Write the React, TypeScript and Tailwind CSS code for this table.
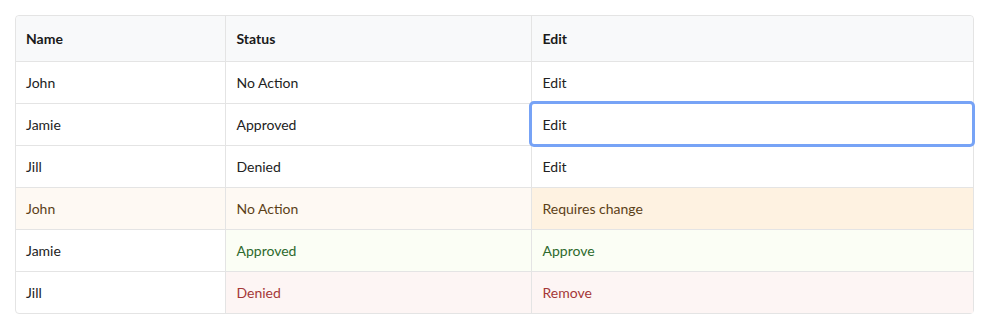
const rows = [
  { name: 'John', status: 'No Action', edit: 'Edit', tone: 'none' },
  { name: 'Jamie', status: 'Approved', edit: 'Edit', tone: 'none', focused: true },
  { name: 'Jill', status: 'Denied', edit: 'Edit', tone: 'none' },
  { name: 'John', status: 'No Action', edit: 'Requires change', tone: 'warn' },
  { name: 'Jamie', status: 'Approved', edit: 'Approve', tone: 'ok' },
  { name: 'Jill', status: 'Denied', edit: 'Remove', tone: 'bad' },
];

const tones: Record<string, { name: string; status: string; edit: string }> = {
  none: { name: 'text-[#222]', status: 'text-[#222]', edit: 'text-[#222]' },
  warn: {
    name: 'bg-[#fef9f3] text-[#5c3f17]',
    status: 'bg-[#fef9f3] text-[#5c3f17]',
    edit: 'bg-[#fef2e1] text-[#5c3f17]',
  },
  ok: {
    name: 'text-[#222]',
    status: 'bg-[#fbfef5] text-[#2d6a2d]',
    edit: 'bg-[#fbfef5] text-[#2d6a2d]',
  },
  bad: {
    name: 'text-[#222]',
    status: 'bg-[#fdf5f4] text-[#a53838]',
    edit: 'bg-[#fdf5f4] text-[#a53838]',
  },
};

export default function App() {
  return (
    <div className="min-h-[331px] bg-white pt-[15px] pl-[15px] font-['Lato',sans-serif] text-[14px]">
      <div className="w-[959px] rounded-[4px] border border-[#e4e4e4]">
        <table className="w-full border-collapse text-left">
          <thead>
            <tr className="h-[45px] bg-[#f8f9fa]">
              <th className="w-[209px] rounded-tl-[4px] border-r border-b border-[#e4e4e4] px-[10px] font-bold text-[#1a1a1a]">Name</th>
              <th className="w-[306px] border-r border-b border-[#e4e4e4] px-[11px] font-bold text-[#1a1a1a]">Status</th>
              <th className="rounded-tr-[4px] border-b border-[#e4e4e4] px-[11px] font-bold text-[#1a1a1a]">Edit</th>
            </tr>
          </thead>
          <tbody>
            {rows.map((row, i) => {
              const t = tones[row.tone];
              const last = i === rows.length - 1;
              const bb = last ? '' : 'border-b';
              return (
                <tr key={i} className="h-[42px]">
                  <td className={`${bb} border-r border-[#e4e4e4] px-[10px] ${t.name}`}>{row.name}</td>
                  <td className={`${bb} border-r border-[#e4e4e4] px-[11px] ${t.status}`}>{row.status}</td>
                  <td
                    className={`${bb} border-[#e4e4e4] px-[11px] ${t.edit} ${
                      row.focused ? 'rounded-[3px] outline-[3px] outline-solid outline-[#77a3f6] -outline-offset-1' : ''
                    }`}
                  >
                    {row.edit}
                  </td>
                </tr>
              );
            })}
          </tbody>
        </table>
      </div>
    </div>
  );
}
